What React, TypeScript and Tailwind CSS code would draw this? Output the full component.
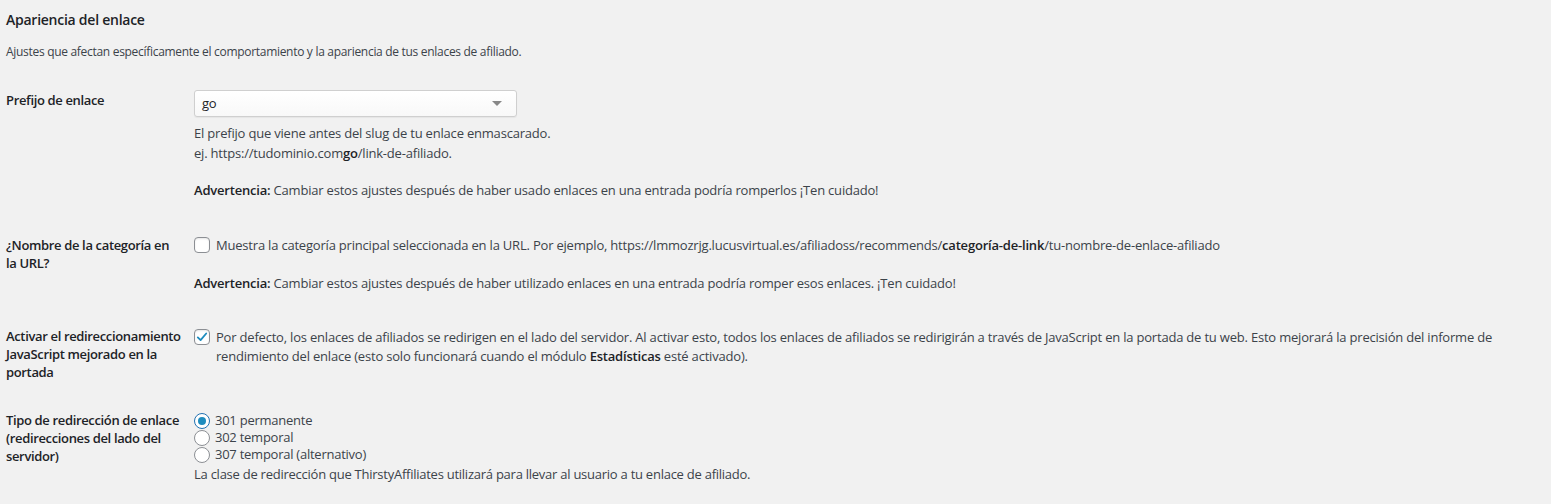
import React from "react";

const font = { fontFamily: '"Open Sans", "Noto Sans", sans-serif' };

function Checkbox({ checked }: { checked?: boolean }) {
  return (
    <span className="inline-flex shrink-0 w-[16px] h-[16px] rounded-[4px] border border-[#8c8f94] bg-white items-center justify-center shadow-[inset_0_1px_2px_rgba(0,0,0,0.1)]">
      {checked && (
        <svg width="14" height="14" viewBox="0 0 20 20">
          <path d="M4 10.5 L8 14.5 L16 5" fill="none" stroke="#1e8cbe" strokeWidth="2.6" strokeLinecap="round" strokeLinejoin="round" />
        </svg>
      )}
    </span>
  );
}

function Radio({ checked }: { checked?: boolean }) {
  return (
    <span
      className={
        "inline-flex shrink-0 w-[16px] h-[16px] rounded-full border bg-white items-center justify-center " +
        (checked ? "border-[#2271b1]" : "border-[#8c8f94]")
      }
    >
      {checked && <span className="w-[8px] h-[8px] rounded-full bg-[#1e8cbe]" />}
    </span>
  );
}

const label = "w-[188px] shrink-0 pr-[12px] text-[13px] leading-[18px] font-semibold text-[#1d2327] tracking-[-0.35px]";

export default function App() {
  return (
    <div className="min-h-[504px] w-full bg-[#f1f1f1] text-[#3c434a] pl-[6px]" style={font}>
      <h2 className="pt-[10px] text-[14px] leading-[20px] font-semibold text-[#1d2327] tracking-[-0.25px]">Apariencia del enlace</h2>
      <p className="mt-[13px] text-[12px] leading-[18px] text-[#3c434a] tracking-[-0.3px]">
        Ajustes que afectan específicamente el comportamiento y la apariencia de tus enlaces de afiliado.
      </p>

      {/* Row 1 */}
      <div className="mt-[29px] flex">
        <div className={label + " pt-[1px]"}>Prefijo de enlace</div>
        <div className="text-[13px] tracking-[-0.2px]">
          <div className="w-[323px] h-[27px] rounded-[3px] border border-[#cfcfcf] bg-gradient-to-b from-white to-[#f8f8f8] flex items-center justify-between pl-[7px] pr-[14px] shadow-[0_1px_1px_rgba(0,0,0,0.05)]">
            <span className="text-[#1d2327] text-[13px]">go</span>
            <svg width="10" height="6" viewBox="0 0 10 6">
              <path d="M0 0 H10 L5 5 Z" fill="#888" />
            </svg>
          </div>
          <p className="mt-[6px] leading-[20px]">
            El prefijo que viene antes del slug de tu enlace enmascarado.
            <br />
            ej. https://tudominio.com<b className="font-semibold text-[#1d2327]">go</b>/link-de-afiliado.
          </p>
          <p className="mt-[17px] leading-[20px]">
            <b className="font-semibold text-[#1d2327]">Advertencia:</b> Cambiar estos ajustes después de haber usado enlaces en una entrada podría romperlos ¡Ten cuidado!
          </p>
        </div>
      </div>

      {/* Row 2 */}
      <div className="mt-[36px] flex">
        <div className={label}>¿Nombre de la categoría en la URL?</div>
        <div className="text-[13px] -mt-[1px] tracking-[-0.2px]">
          <div className="flex items-center gap-[6px] leading-[20px]">
            <Checkbox />
            <span>
              Muestra la categoría principal seleccionada en la URL. Por ejemplo, https://lmmozrjg.lucusvirtual.es/afiliadoss/recommends/
              <b className="font-semibold text-[#1d2327]">categoría-de-link</b>/tu-nombre-de-enlace-afiliado
            </span>
          </div>
          <p className="mt-[18px] leading-[20px]">
            <b className="font-semibold text-[#1d2327]">Advertencia:</b> Cambiar estos ajustes después de haber utilizado enlaces en una entrada podría romper esos enlaces. ¡Ten cuidado!
          </p>
        </div>
      </div>

      {/* Row 3 */}
      <div className="mt-[34px] flex">
        <div className={label}>Activar el redireccionamiento JavaScript mejorado en la portada</div>
        <div className="flex items-start gap-[6px] text-[13px] leading-[19px] pr-[20px] pt-[1px] tracking-[-0.2px]">
          <span className="pt-[1px]">
            <Checkbox checked />
          </span>
          <p>
            Por defecto, los enlaces de afiliados se redirigen en el lado del servidor. Al activar esto, todos los enlaces de afiliados se redirigirán a través de JavaScript en la portada de tu web. Esto mejorará la precisión del informe de rendimiento del enlace (esto solo funcionará cuando el módulo <b className="font-semibold text-[#1d2327]">Estadísticas</b> esté activado).
          </p>
        </div>
      </div>

      {/* Row 4 */}
      <div className="mt-[30px] flex">
        <div className={label}>Tipo de redirección de enlace (redirecciones del lado del servidor)</div>
        <div className="text-[13px] pt-[1px] tracking-[-0.25px]">
          <div className="flex items-center gap-[5px] leading-[17px]"><Radio checked /><span>301 permanente</span></div>
          <div className="flex items-center gap-[5px] leading-[17px]"><Radio /><span>302 temporal</span></div>
          <div className="flex items-center gap-[5px] leading-[17px]"><Radio /><span>307 temporal (alternativo)</span></div>
          <p className="mt-[1px] leading-[20px]">
            La clase de redirección que ThirstyAffiliates utilizará para llevar al usuario a tu enlace de afiliado.
          </p>
        </div>
      </div>
    </div>
  );
}
